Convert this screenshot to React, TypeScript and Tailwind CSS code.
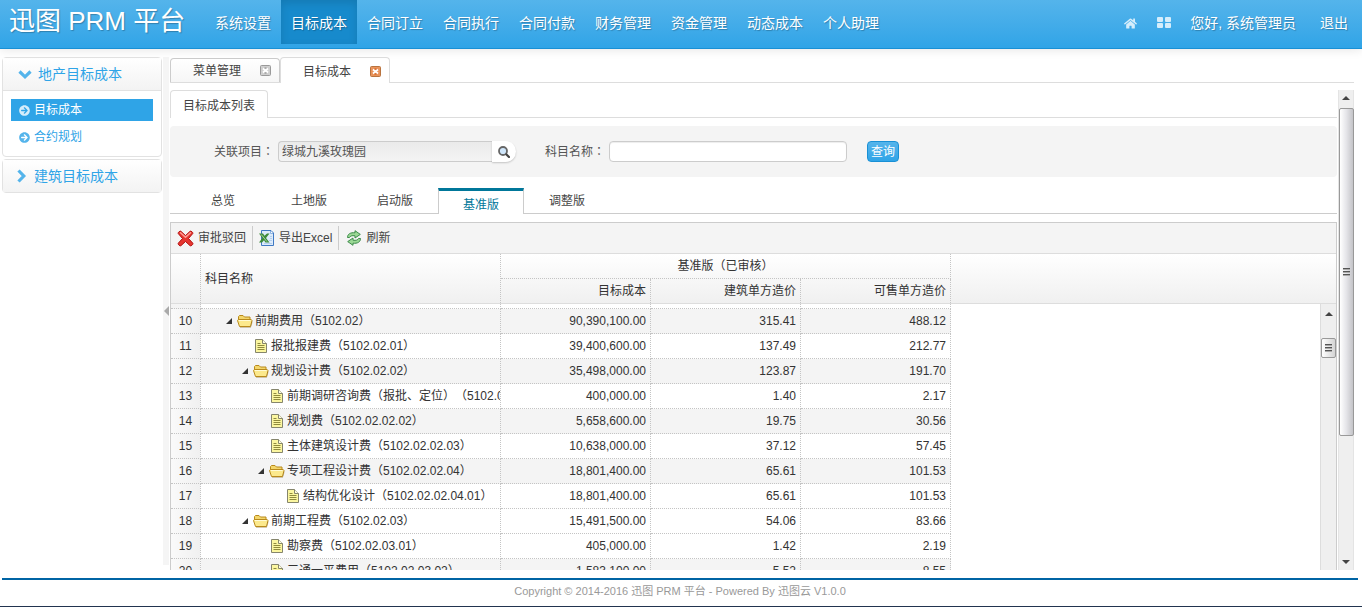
import { useState } from 'react'
import clsx from 'clsx'
import { FaArrowCircleRight, FaHome } from 'react-icons/fa'

interface CostRow {
  no: number
  depth: number
  folder?: boolean
  name: string
  target: string
  building: string
  saleable: string
  shaded?: boolean
}

const NAV = ['系统设置', '目标成本', '合同订立', '合同执行', '合同付款', '财务管理', '资金管理', '动态成本', '个人助理']
const VERSIONS = ['总览', '土地版', '启动版', '基准版', '调整版']

const ROWS: CostRow[] = [
  { no: 10, depth: 1, folder: true, name: '前期费用（5102.02）', target: '90,390,100.00', building: '315.41', saleable: '488.12', shaded: true },
  { no: 11, depth: 2, name: '报批报建费（5102.02.01）', target: '39,400,600.00', building: '137.49', saleable: '212.77' },
  { no: 12, depth: 2, folder: true, name: '规划设计费（5102.02.02）', target: '35,498,000.00', building: '123.87', saleable: '191.70', shaded: true },
  { no: 13, depth: 3, name: '前期调研咨询费（报批、定位）（5102.02.02.01）', target: '400,000.00', building: '1.40', saleable: '2.17' },
  { no: 14, depth: 3, name: '规划费（5102.02.02.02）', target: '5,658,600.00', building: '19.75', saleable: '30.56', shaded: true },
  { no: 15, depth: 3, name: '主体建筑设计费（5102.02.02.03）', target: '10,638,000.00', building: '37.12', saleable: '57.45' },
  { no: 16, depth: 3, folder: true, name: '专项工程设计费（5102.02.02.04）', target: '18,801,400.00', building: '65.61', saleable: '101.53', shaded: true },
  { no: 17, depth: 4, name: '结构优化设计（5102.02.02.04.01）', target: '18,801,400.00', building: '65.61', saleable: '101.53' },
  { no: 18, depth: 2, folder: true, name: '前期工程费（5102.02.03）', target: '15,491,500.00', building: '54.06', saleable: '83.66' },
  { no: 19, depth: 3, name: '勘察费（5102.02.03.01）', target: '405,000.00', building: '1.42', saleable: '2.19' },
  { no: 20, depth: 3, name: '三通一平费用（5102.02.03.02）', target: '1,583,100.00', building: '5.52', saleable: '8.55', shaded: true },
]

function FolderIcon() {
  return (
    <svg width="16" height="16" viewBox="0 0 16 16" className="shrink-0">
      <path d="M1.500 8V3.500l1-1H6l1.500 1.500h5.500V8" fill="#f3d66b" stroke="#b98a1c" strokeLinejoin="round" />
      <path d="M2.500 13.500.500 7.500l.8-1h12.900l.8 1-1.500 6z" fill="#fce98c" stroke="#b98a1c" strokeLinejoin="round" />
      <path d="M2 7.500h11.500" stroke="#fffbd6" />
      <path d="M3 14.500h10.500l1.800-6" fill="none" stroke="#8a6a20" strokeOpacity=".35" />
    </svg>
  )
}

function FileIcon() {
  return (
    <svg width="16" height="16" viewBox="0 0 16 16" className="shrink-0">
      <path d="M2.500 1.500h7l4 4v9h-11z" fill="#fbf6a0" stroke="#85856c" />
      <path d="M9.500 1.500v4h4" fill="#fffde0" stroke="#85856c" />
      <path d="M4.500 5.500h3M4.500 7.500h7M4.500 9.500h7M4.500 11.500h7" stroke="#8f8a3c" />
    </svg>
  )
}

function RejectIcon() {
  return (
    <svg width="17" height="17" viewBox="0 0 17 17">
      <path
        d="M3.800 1.200 8.500 5.600l4.700-4.400c.8-.5 3 1.200 2.600 2.300L11.500 8.500l4.400 4.800c.4 1.100-1.700 3-2.700 2.500L8.500 11.500l-4.700 4.300c-1 .5-3-1.400-2.600-2.500L5.500 8.500 1.200 3.500C.8 2.400 3 .7 3.800 1.200z"
        fill="#e5352f"
        stroke="#b3100f"
      />
      <path d="M3.500 2.700l5 4.600 5-4.600" fill="none" stroke="#ff9d95" strokeWidth="1.500" strokeLinecap="round" />
    </svg>
  )
}

function ExcelIcon() {
  return (
    <svg width="16" height="16" viewBox="0 0 16 16">
      <path d="M2.500.5H12l2.500 2.500v12.500h-12z" fill="#dcebfb" stroke="#3f78c3" />
      <path d="M11.500 1v2.500H14" fill="#fff" stroke="#8db4e2" />
      <path d="M11 6.500h2M11 8.500h2M10 10.500h3M5 13.500h8" stroke="#b4cfee" />
      <path d="M0 3.500h4l1.500 2.300L8 3.500h2.500L7 8l3.500 4.500h-4L5 10.300 3 12.500H0L3.300 8z" fill="#3c8a3a" />
      <path d="M2.200 4.500 7.800 11.500" stroke="#a8d8a0" />
    </svg>
  )
}

function RefreshIcon() {
  return (
    <svg width="16" height="16" viewBox="0 0 16 16" fill="#9ad894" stroke="#3c8a4a" strokeLinejoin="round">
      <path d="M1.500 7.500C1.500 4 4.500 2.300 9 2.800V.7l5.300 3.700L9 8V5.800C6 5.300 4.200 6 3.500 7.500z" />
      <path d="M14.500 8.500c0 3.500-3 5.200-7.500 4.700v2.100L1.700 11.600 7 8v2.200c3 .5 4.800-.2 5.500-1.700z" />
    </svg>
  )
}

function SearchIcon() {
  return (
    <svg width="12" height="12" viewBox="0 0 12 12" fill="none">
      <circle cx="5" cy="5" r="4" fill="#cfe6fb" stroke="#666" strokeWidth="1.800" />
      <path d="M8.500 8.500l2.500 2.500" stroke="#444" strokeWidth="2.200" strokeLinecap="round" />
    </svg>
  )
}

function Chevron({ down }: { down?: boolean }) {
  return (
    <svg width="14" height="14" viewBox="0 0 14 14" fill="none" stroke="#54b4eb" strokeWidth="3.200" className="shrink-0">
      <path d={down ? 'M1.500 4.500 7 9.800l5.500-5.300' : 'M4.500 1.500 9.800 7l-5.300 5.500'} />
    </svg>
  )
}

function TilesIcon() {
  return (
    <svg width="14" height="12" viewBox="0 0 14 12" fill="currentColor">
      <rect width="6" height="5" rx="1" />
      <rect x="8" width="6" height="5" rx="1" />
      <rect y="6" width="6" height="5" rx="1" />
      <rect x="8" y="6" width="6" height="5" rx="1" />
    </svg>
  )
}

function CloseIcon({ active }: { active?: boolean }) {
  return (
    <svg width="11" height="11" viewBox="0 0 11 11">
      <rect x=".5" y=".5" width="10" height="10" rx="1" fill={active ? '#e9935a' : '#cfcfcf'} stroke={active ? '#b8733f' : '#9a9a9a'} />
      <path d="M3 3.500l5 4M8 3.500l-5 4" stroke="#fff" strokeWidth="1.800" />
      <path d="M4.500 3h2M4.500 8h2" stroke={active ? '#c9581c' : '#8a8a8a'} />
    </svg>
  )
}

function ScrollArrow({ down }: { down?: boolean }) {
  return (
    <svg width="8" height="4" viewBox="0 0 8 4" className={down ? 'rotate-180' : ''}>
      <path d="M4 0l4 4H0z" fill="#444" />
    </svg>
  )
}

function Grip() {
  return (
    <svg width="7" height="8" viewBox="0 0 7 8">
      <path d="M0 .5h7M0 3.500h7M0 6.500h7" stroke="#555" />
      <path d="M0 1.500h7M0 4.500h7M0 7.500h7" stroke="#aaa" />
    </svg>
  )
}

function Header() {
  const [current, setCurrent] = useState('目标成本')
  return (
    <header className="z-10 flex h-[49px] shrink-0 justify-between border-b border-[#1990d5] bg-linear-to-b from-[#54b4eb] to-[#2fa4e7] text-sm text-white shadow-[0_1px_10px_rgba(0,0,0,0.1)] [text-shadow:1px_1px_1px_rgba(0,0,0,0.25)]">
      <div className="flex">
        <h1 className="w-[205px] pl-[9px] text-[26px] leading-[42px] whitespace-nowrap">迅图 PRM 平台</h1>
        <nav className="flex h-[44px]">
          {NAV.map((item) => (
            <a
              key={item}
              href="#"
              onClick={() => setCurrent(item)}
              className={clsx(
                'px-[10px] leading-[46px] whitespace-nowrap',
                item === current && 'bg-[#178acc] shadow-[inset_0_3px_8px_rgba(0,0,0,0.125)]',
              )}
            >
              {item}
            </a>
          ))}
        </nav>
      </div>
      <div className="flex h-[46px] items-center pr-[14px] whitespace-nowrap">
        <a href="#" aria-label="首页" className="mr-5 text-[#d5edfb]"><FaHome size={13} /></a>
        <a href="#" aria-label="菜单" className="mr-[19px] text-[#d5edfb]"><TilesIcon /></a>
        <a href="#" className="mr-6">您好, 系统管理员</a>
        <a href="#">退出</a>
      </div>
    </header>
  )
}

function Sidebar() {
  return (
    <aside className="w-[160px] shrink-0 text-[#2fa4e7]">
      <div className="rounded border border-[#e2e2e2]">
        <button className="flex h-[33px] w-full items-center gap-[6px] border-b border-[#e2e2e2] bg-linear-to-b from-white to-[#f3f3f3] pl-[15px] text-sm">
          <Chevron down />
          地产目标成本
        </button>
        <div className="flex flex-col gap-[5px] p-2 text-xs">
          <a href="#" className="flex h-[22px] items-center gap-1 bg-[#2fa4e7] pl-2 text-white">
            <FaArrowCircleRight size={11} className="text-[#d5edfb]" />
            目标成本
          </a>
          <a href="#" className="flex h-[22px] items-center gap-1 pl-2">
            <FaArrowCircleRight size={11} className="text-[#54b4eb]" />
            合约规划
          </a>
        </div>
      </div>
      <div className="mt-[2px] rounded border border-[#e2e2e2]">
        <button className="flex h-8 w-full items-center gap-[6px] bg-linear-to-b from-white to-[#f3f3f3] pl-[11px] text-sm">
          <Chevron />
          建筑目标成本
        </button>
      </div>
    </aside>
  )
}

function SearchPanel() {
  return (
    <form className="mt-2 flex h-[51px] shrink-0 items-center rounded bg-[#f4f4f4] pl-11 text-xs text-[#555]">
      <label htmlFor="project">
        关联项目<span className="font-['Noto_Sans_CJK_TC',sans-serif]" lang="zh-Hant">：</span>
      </label>
      <input
        id="project"
        readOnly
        defaultValue="绿城九溪玫瑰园"
        className="ml-1 h-[21px] w-[214px] rounded-l border border-r-0 border-[#ccc] bg-linear-to-b from-[#eaeaea] to-[#f4f4f4] px-[3px] pb-[2px] outline-none"
      />
      <button type="button" aria-label="选择项目" className="flex h-[21px] w-6 items-center justify-center rounded-r-full bg-white shadow-[0_1px_2px_rgba(0,0,0,0.2)]">
        <SearchIcon />
      </button>
      <label htmlFor="subject" className="ml-[29px]">
        科目名称<span className="font-['Noto_Sans_CJK_TC',sans-serif]" lang="zh-Hant">：</span>
      </label>
      <input
        id="subject"
        className="ml-1 h-[21px] w-[238px] rounded border border-[#ccc] bg-white px-[3px] shadow-[inset_0_1px_1px_rgba(0,0,0,0.075)] outline-none"
      />
      <button type="button" className="ml-5 h-[21px] w-8 rounded border border-[#1990d5] bg-linear-to-b from-[#54b4eb] to-[#2fa4e7] leading-[18px] text-white">
        查询
      </button>
    </form>
  )
}

function VersionTabs() {
  const [version, setVersion] = useState('基准版')
  return (
    <div className="mt-[11px] flex h-[26px] shrink-0 border-b border-[#ccc] pl-[10px] text-xs text-[#444]">
      {VERSIONS.map((v) => (
        <button
          key={v}
          onClick={() => setVersion(v)}
          className={clsx(
            'w-[86px]',
            v === version ? 'h-[26px] border-x border-t-[3px] border-x-[#ccc] border-t-[#00779a] bg-white pt-1 text-[#00779a]' : 'h-[25px]',
          )}
        >
          {v}
        </button>
      ))}
    </div>
  )
}

function CostColumns() {
  return (
    <>
      <col className="w-[30px]" />
      <col className="w-[300px]" />
      <col className="w-[150px]" />
      <col className="w-[150px]" />
      <col className="w-[150px]" />
    </>
  )
}

function CostGrid() {
  return (
    <div className="mt-2 flex min-h-0 flex-1 flex-col border border-b-0 border-[#ccc] text-xs text-[#333]">
      <div className="flex h-[31px] shrink-0 items-center border-b border-[#ddd] bg-[#f4f4f4] pl-[6px] text-[#444]">
        <button className="flex h-6 items-center gap-1 border-r border-[#ccc] pr-[6px]"><RejectIcon />审批驳回</button>
        <button className="flex h-6 items-center gap-1 border-r border-[#ccc] px-[6px]"><ExcelIcon />导出Excel</button>
        <button className="flex h-6 items-center gap-1 px-[7px]"><RefreshIcon />刷新</button>
      </div>
      <div className="shrink-0 border-b border-[#ddd] bg-linear-to-b from-white to-[#f0f0f0]">
        <table className="w-full table-fixed border-separate border-spacing-0">
          <colgroup>
            <CostColumns />
            <col />
          </colgroup>
          <thead className="[&_th]:border-dotted [&_th]:border-[#c4c4c4] [&_th]:px-1 [&_th]:py-0 [&_th]:font-normal">
            <tr className="h-[25px]">
              <th rowSpan={2} className="border-r" />
              <th rowSpan={2} className="border-r text-left">科目名称</th>
              <th colSpan={3} className="border-r border-b">基准版（已审核）</th>
              <th rowSpan={2} />
            </tr>
            <tr className="h-6">
              <th className="border-r text-right">目标成本</th>
              <th className="border-r text-right">建筑单方造价</th>
              <th className="border-r text-right">可售单方造价</th>
            </tr>
          </thead>
        </table>
      </div>
      <div className="flex min-h-0 flex-1">
        <div className="min-w-0 flex-1 overflow-hidden">
          <table className="w-[780px] table-fixed border-separate border-spacing-0">
            <colgroup>
              <CostColumns />
            </colgroup>
            <tbody className="[&_td]:border-r [&_td]:border-b [&_td]:border-dotted [&_td]:border-[#c4c4c4] [&_td]:py-0">
              <tr className="h-[5px]">
                <td className="bg-[#f4f4f4]" />
                <td />
                <td />
                <td />
                <td />
              </tr>
              {ROWS.map((row) => (
                <tr key={row.no} className={clsx('h-[25px]', row.shaded && 'bg-[#f4f4f4]')}>
                  <td className="bg-linear-to-r from-[#fafafa] to-[#f0f0f0] text-center">{row.no}</td>
                  <td className="overflow-hidden">
                    <div className="flex items-center whitespace-nowrap" style={{ paddingLeft: 4 + row.depth * 16 }}>
                      <span className="flex w-4 shrink-0 justify-center">
                        {row.folder && (
                          <svg width="6" height="6" viewBox="0 0 6 6">
                            <path d="M6 0v6H0z" fill="#333" />
                          </svg>
                        )}
                      </span>
                      {row.folder ? <FolderIcon /> : <FileIcon />}
                      <span className="ml-[2px] [text-spacing-trim:space-all]">{row.name}</span>
                    </div>
                  </td>
                  <td className="px-1 text-right">{row.target}</td>
                  <td className="px-1 text-right">{row.building}</td>
                  <td className="px-1 text-right">{row.saleable}</td>
                </tr>
              ))}
            </tbody>
          </table>
        </div>
        <div className="flex w-4 flex-col items-center border-l border-[#ddd] bg-[#efefef] pt-2">
          <ScrollArrow />
          <div className="mt-[22px] flex h-5 w-[15px] items-center justify-center rounded-xs border border-[#999] bg-linear-to-r from-white to-[#d4d4d4]">
            <Grip />
          </div>
        </div>
      </div>
    </div>
  )
}

export default function App() {
  return (
    <div className="flex h-screen flex-col overflow-hidden border-b border-[#22344f] bg-white font-['Liberation_Sans','Noto_Sans_CJK_SC',sans-serif]">
      <Header />
      <div className="flex min-h-0 flex-1 pt-2 pr-2 pb-2 pl-[2px]">
        <Sidebar />
        <div className="mr-px mb-[5px] ml-px flex w-[6px] shrink-0 items-center justify-end bg-[#f5f5f5]">
          <svg width="5" height="10" viewBox="0 0 5 10">
            <path d="M5 0v10L0 5z" fill="#aaa" />
          </svg>
        </div>
        <main className="flex min-w-0 flex-1 flex-col">
          <div className="flex h-[26px] shrink-0 items-end border-b border-[#ddd] text-xs text-[#444]">
            <div className="flex h-6 w-[110px] items-center justify-between rounded-t border border-b-0 border-[#ccc] bg-linear-to-b from-white to-[#f6f6f6] pr-2 pl-[22px]">
              <a href="#">菜单管理</a>
              <button aria-label="关闭菜单管理"><CloseIcon /></button>
            </div>
            <div className="-mb-px flex h-[26px] w-[110px] items-center justify-between rounded-t border border-b-0 border-[#ddd] bg-white pt-[2px] pr-2 pl-[22px]">
              <a href="#">目标成本</a>
              <button aria-label="关闭目标成本"><CloseIcon active /></button>
            </div>
          </div>
          <div className="mt-[7px] flex min-h-0 flex-1">
            <div className="mr-px flex min-w-0 flex-1 flex-col">
              <div className="flex h-7 shrink-0 border-b border-[#ddd] text-xs text-[#444]">
                <a href="#" className="h-7 rounded-t border border-b-0 border-[#ddd] bg-white px-3 leading-[31px]">目标成本列表</a>
              </div>
              <SearchPanel />
              <VersionTabs />
              <CostGrid />
            </div>
            <div className="flex w-4 shrink-0 flex-col items-center border-x border-[#e4e4e4] bg-[#efefef] py-[6px]">
              <ScrollArrow />
              <div className="mt-2 flex h-[328px] w-[15px] items-center justify-center rounded-xs border border-[#999] bg-linear-to-r from-white via-[#e4e4e8] to-[#c4c4c8]">
                <Grip />
              </div>
              <div className="mt-auto">
                <ScrollArrow down />
              </div>
            </div>
          </div>
        </main>
      </div>
      <footer className="mr-1 ml-[2px] h-[28px] shrink-0 border-t-2 border-[#0064a4] text-center text-[11px] leading-[23px] text-[#999]">
        Copyright © 2014-2016 迅图 PRM 平台 - Powered By 迅图云 V1.0.0
      </footer>
    </div>
  )
}
